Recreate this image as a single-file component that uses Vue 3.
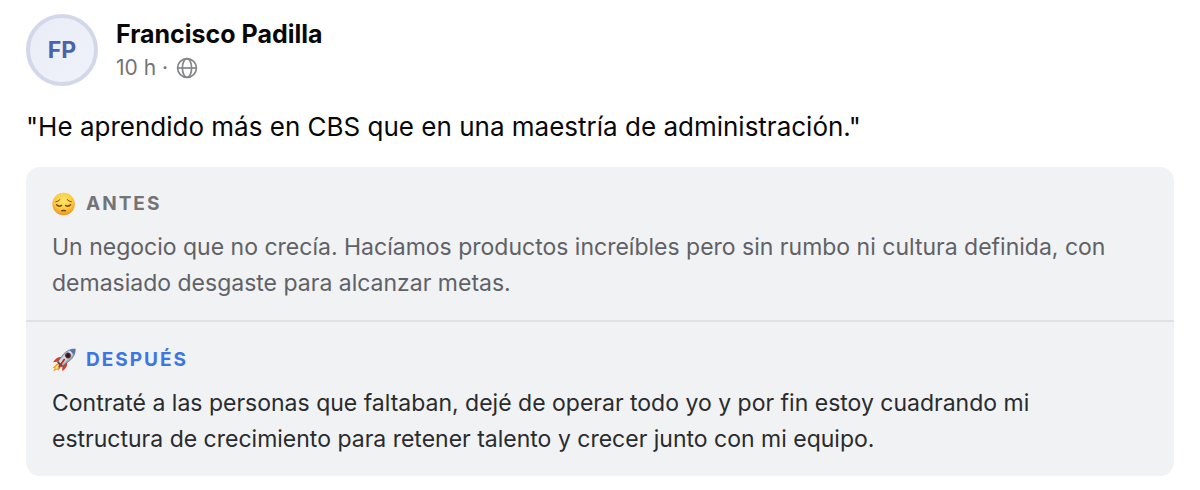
<script setup>
const quote = '"He aprendido más en CBS que en una maestría de administración."'
</script>

<template>
  <article class="post">
    <header class="head">
      <div class="avatar">FP</div>
      <div class="who">
        <h2 class="name">Francisco Padilla</h2>
        <p class="meta">
          <span>10 h ·</span>
          <svg class="globe" viewBox="0 0 22 22" fill="none" stroke="currentColor" stroke-width="1.7" aria-hidden="true">
            <circle cx="11" cy="11" r="9.4" />
            <ellipse cx="11" cy="11" rx="4.6" ry="9.4" />
            <path d="M1.6 11h18.8" />
          </svg>
        </p>
      </div>
    </header>

    <p class="quote">{{ quote }}</p>

    <div class="card">
      <section class="part before">
        <h3 class="label">
          <svg class="emoji" viewBox="0 0 24 24" aria-hidden="true">
            <defs>
              <radialGradient id="face" cx=".5" cy=".35" r=".68">
                <stop offset="0" stop-color="#ffe76a" />
                <stop offset=".6" stop-color="#fcc83c" />
                <stop offset="1" stop-color="#e98b20" />
              </radialGradient>
            </defs>
            <circle cx="11.6" cy="12" r="11.2" fill="url(#face)" />
            <g fill="none" stroke="#78421a" stroke-linecap="round">
              <path d="M3.8 9.8Q6.4 9.4 8 7.6M19.4 9.8Q16.8 9.4 15.2 7.6" stroke-width=".9" />
              <path d="M4.6 12.8Q7 15.2 9.6 13.4M18.6 12.8Q16.2 15.2 13.6 13.4" stroke-width="1.4" />
              <path d="M9.8 18.8Q11.6 18 13.4 18.8" stroke-width="1.5" />
            </g>
          </svg>
          Antes
        </h3>
        <p class="text">Un negocio que no crecía. Hacíamos productos increíbles pero sin rumbo ni cultura definida, con demasiado desgaste para alcanzar metas.</p>
      </section>
      <section class="part after">
        <h3 class="label">
          <svg class="emoji" viewBox="0 0 24 24" aria-hidden="true">
            <defs>
              <linearGradient id="hull" x1=".2" y1=".2" x2=".8" y2=".8">
                <stop offset="0" stop-color="#6f87a0" />
                <stop offset=".45" stop-color="#e8eef3" />
                <stop offset="1" stop-color="#50677f" />
              </linearGradient>
            </defs>
            <path d="M5.2 15.4L.3 20.2 3 19.8 1.2 23.3 5.4 21.2 6.2 22.4 9.2 18.8Z" fill="#f28a1c" />
            <path d="M5.6 16.7L2.6 19.4 4 19.4 3 21.6 6.4 20 8 18Z" fill="#ffe45c" />
            <path d="M9.6 9.1Q4.6 8.6 1 14.2L6.6 13.4Z" fill="#d83a24" />
            <path d="M15.3 14.2Q15.6 19.8 10.2 23.2L10.4 17.8Z" fill="#d83a24" />
            <path d="M23.3 1Q16.2.8 11.4 6.2L5.6 13.8 10 18.4 17.8 12.6Q23.4 8 23.3 1Z" fill="url(#hull)" stroke="#50647a" stroke-width=".6" />
            <path d="M23.3 1Q20.2.8 17.4 2.1L22.2 6.9Q23.4 4 23.3 1Z" fill="#5277a4" />
            <path d="M6.2 13L5.2 14.8 9.2 18.9 11 17.7Z" fill="#59494b" />
            <circle cx="16" cy="7.5" r="2.9" fill="#6b2c2b" />
            <circle cx="16" cy="7.5" r="1.7" fill="#201b26" />
            <path d="M12.2 11.4L7.2 18.8" stroke="#b92e24" stroke-width="1.8" stroke-linecap="round" />
          </svg>
          Después
        </h3>
        <p class="text">Contraté a las personas que faltaban, dejé de operar todo yo y por fin estoy cuadrando mi estructura de crecimiento para retener talento y crecer junto con mi equipo.</p>
      </section>
    </div>
  </article>
</template>

<style>
body {
  background: #fff;
}
</style>

<style scoped>
.post {
  padding: 14px 26px;
  font-family: Inter, "Liberation Sans", sans-serif;
  color: #080809;
}
h2, h3, p {
  margin: 0;
}
.head {
  display: flex;
  align-items: center;
  gap: 18px;
}
.avatar {
  box-sizing: border-box;
  width: 72px;
  height: 72px;
  flex: none;
  display: flex;
  align-items: center;
  justify-content: center;
  border: 4px solid #d3d7ea;
  border-radius: 50%;
  background: linear-gradient(135deg, #e9edf6, #f0f2fa);
  color: #4864ad;
  font-size: 23px;
  font-weight: 700;
}
.name {
  font-size: 25px;
  line-height: 36px;
  font-weight: 700;
}
.meta {
  display: flex;
  align-items: center;
  gap: 8px;
  font-size: 21px;
  line-height: 32px;
  color: #737477;
}
.globe {
  width: 22px;
  height: 22px;
  color: #858689;
}
.quote {
  margin: 22px 0;
  font-size: 26px;
  line-height: 37px;
}
.card {
  border-radius: 14px;
  background: #f0f2f4;
}
.part {
  padding: 24px 36px 19px 26px;
}
.after {
  padding-top: 25px;
  border-top: 2px solid #dfe1e4;
}
.label {
  display: flex;
  align-items: center;
  gap: 10px;
  margin-bottom: 12px;
  font-size: 19px;
  line-height: 26px;
  font-weight: 700;
  letter-spacing: 2px;
  text-transform: uppercase;
  color: #737477;
}
.after .label {
  color: #3e75e4;
}
.emoji {
  width: 24px;
  height: 24px;
}
.text {
  font-size: 23px;
  line-height: 36px;
  color: #606166;
}
.after .text {
  color: #2a2b2e;
}
</style>
